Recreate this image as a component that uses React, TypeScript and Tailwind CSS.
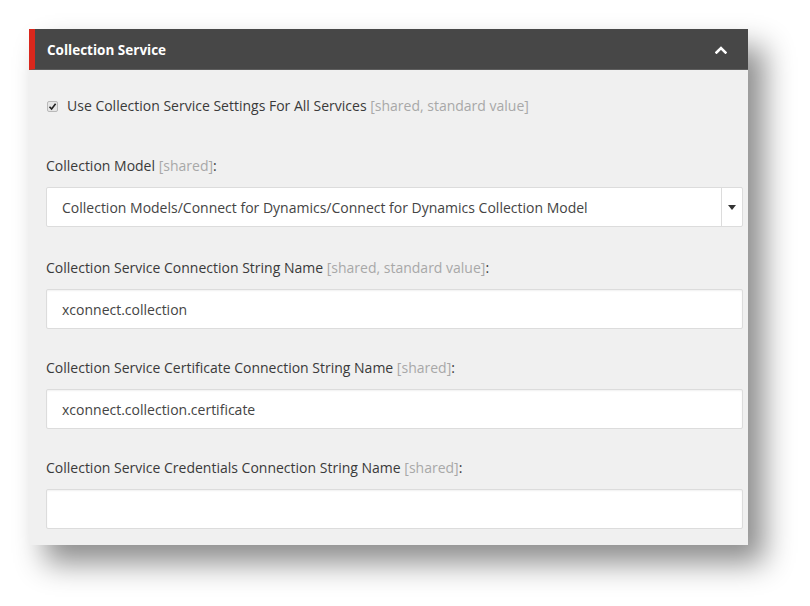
import React from 'react';

const FONT = { fontFamily: '"Open Sans", "Noto Sans", sans-serif' };

function FieldLabel({ label, meta }: { label: string; meta: string }) {
  return (
    <p className="text-[14px] leading-[18px] text-[#3a3a3a]">
      {label} <span className="text-[#a8a8a8]">[{meta}]</span>:
    </p>
  );
}

function TextBox({ value }: { value: string }) {
  return (
    <div className="h-10 bg-white border border-[#dcdcdc] rounded-[2px] shadow-[inset_0_1px_2px_rgba(0,0,0,0.06)] flex items-center px-[15px] text-[14px] text-[#444]">
      {value}
    </div>
  );
}

export default function App() {
  return (
    <div className="w-[810px] h-[606px] bg-white pt-[29px] pl-[29px]" style={FONT}>
      <div className="w-[719px] bg-[#f0f0f0] shadow-[16px_18px_28px_rgba(0,0,0,0.45)]">
        {/* header */}
        <div className="h-[41px] bg-[#474747] border-l-[6px] border-[#d9271c] border-b border-b-[#5e5e5e] flex items-center justify-between pl-[12px] pr-[21px]">
          <span className="text-[13.5px] font-bold text-white mt-[2px]">Collection Service</span>
          <svg width="12" height="8" viewBox="0 0 12 8" className="mt-[1px]">
            <path d="M1.5 6.5 L6 2 L10.5 6.5" fill="none" stroke="#ffffff" strokeWidth="2.6" strokeLinecap="square" />
          </svg>
        </div>

        <div className="pl-[17px] pr-[5px] pt-[27px] pb-[16px]">
          {/* checkbox */}
          <label className="flex items-center gap-[9px] pl-[1px] text-[14px] leading-[18px] text-[#3a3a3a]">
            <span className="w-[11px] h-[11px] rounded-[2px] border border-[#b9b9b9] bg-[#e6e6e6] flex items-center justify-center">
              <svg width="9" height="9" viewBox="0 0 9 9">
                <path d="M1.5 4.8 L3.6 7 L7.6 1.8" fill="none" stroke="#222" strokeWidth="1.6" />
              </svg>
            </span>
            <span>
              Use Collection Service Settings For All Services{' '}
              <span className="text-[#a8a8a8]">[shared, standard value]</span>
            </span>
          </label>

          {/* collection model */}
          <div className="mt-[42px]">
            <FieldLabel label="Collection Model" meta="shared" />
            <div className="mt-[12px] h-10 bg-white border border-[#dcdcdc] rounded-[2px] flex">
              <div className="flex-1 flex items-center px-[15px] text-[14px] text-[#444]">
                Collection Models/Connect for Dynamics/Connect for Dynamics Collection Model
              </div>
              <div className="w-[21px] border-l border-[#dcdcdc] flex items-center justify-center">
                <svg width="8" height="5" viewBox="0 0 8 5">
                  <path d="M0 0 H8 L4 5 Z" fill="#333" />
                </svg>
              </div>
            </div>
          </div>

          <div className="mt-[32px]">
            <FieldLabel label="Collection Service Connection String Name" meta="shared, standard value" />
            <div className="mt-[12px]">
              <TextBox value="xconnect.collection" />
            </div>
          </div>

          <div className="mt-[30px]">
            <FieldLabel label="Collection Service Certificate Connection String Name" meta="shared" />
            <div className="mt-[12px]">
              <TextBox value="xconnect.collection.certificate" />
            </div>
          </div>

          <div className="mt-[30px]">
            <FieldLabel label="Collection Service Credentials Connection String Name" meta="shared" />
            <div className="mt-[12px]">
              <TextBox value="" />
            </div>
          </div>
        </div>
      </div>
    </div>
  );
}
